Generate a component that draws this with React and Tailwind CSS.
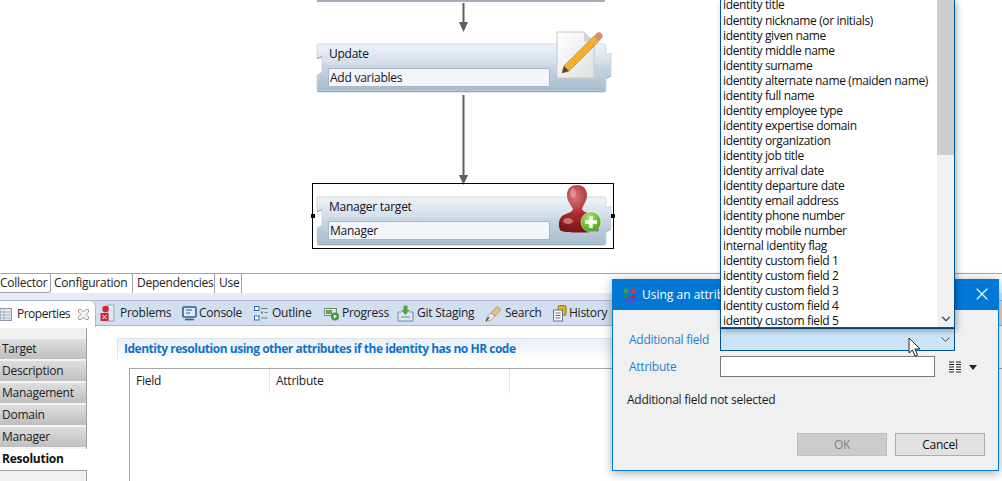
import { ChevronDown, X } from 'lucide-react';

const FIELDS = [
  'identity title', 'identity nickname (or initials)', 'identity given name', 'identity middle name',
  'identity surname', 'identity alternate name (maiden name)', 'identity full name', 'identity employee type',
  'identity expertise domain', 'identity organization', 'identity job title', 'identity arrival date',
  'identity departure date', 'identity email address', 'identity phone number', 'identity mobile number',
  'internal identity flag', 'identity custom field 1', 'identity custom field 2', 'identity custom field 3',
  'identity custom field 4', 'identity custom field 5',
];

const NAV = ['Target', 'Description', 'Management', 'Domain', 'Manager'];

function NodeShape() {
  return (
    <svg className="absolute inset-0" width="297" height="52" viewBox="0 0 297 52">
      <defs>
        <linearGradient id="nodeFill" x1="0" y1="0" x2="0" y2="1">
          <stop offset="0" stopColor="#eef3f8" />
          <stop offset="0.42" stopColor="#d3dee8" />
          <stop offset="0.46" stopColor="#c9d7e3" />
          <stop offset="1" stopColor="#a6bccd" />
        </linearGradient>
      </defs>
      <path d="M3 2 H289 Q291 2 291 4 V13 L296 11 V33 L291 36 V47 Q291 49 289 49 H4 Q2 49 2 47 V33 L7 30 V14 L2 16 V4 Q2 2 3 2 Z" fill="#7f95a8" transform="translate(0 1.2)" />
      <path d="M3 2 H289 Q291 2 291 4 V13 L296 11 V33 L291 36 V47 Q291 49 289 49 H4 Q2 49 2 47 V33 L7 30 V14 L2 16 V4 Q2 2 3 2 Z" fill="url(#nodeFill)" stroke="#c3d2df" strokeWidth="0.8" />
    </svg>
  );
}

function Node({ title, value, className, children }) {
  return (
    <div className={`absolute w-[297px] h-[52px] ${className}`}>
      <NodeShape />
      <div className="absolute left-[14px] top-[2px] text-[12px] leading-[20px] text-[#14101f]">{title}</div>
      <div className="absolute left-[13px] top-[26px] w-[222px] h-[19px] rounded-[2px] border border-[#a4b8ca] bg-[#f2f6fa] pl-[1px] text-[12px] leading-[17px] text-[#14101f]">
        {value}
      </div>
      {children}
    </div>
  );
}

function PencilIcon() {
  return (
    <svg className="absolute left-[241px] top-[-11px]" width="48" height="50" viewBox="0 0 48 50">
      <defs>
        <linearGradient id="docFill" x1="0" y1="0" x2="1" y2="1">
          <stop offset="0" stopColor="#ffffff" />
          <stop offset="1" stopColor="#dfe1e0" />
        </linearGradient>
        <linearGradient id="pencilFill" x1="0" y1="0" x2="1" y2="1">
          <stop offset="0" stopColor="#ffd04a" />
          <stop offset="1" stopColor="#e88f10" />
        </linearGradient>
      </defs>
      <path d="M1 1 H28 L38 11 V47 H1 Z" fill="url(#docFill)" stroke="#c5c9cb" />
      <path d="M28 1 L38 11 H30 Q28 11 28 9 Z" fill="#cfd3d6" />
      <path d="M38 5 L43 10 L13 40 L6 42 L8 35 Z" fill="url(#pencilFill)" stroke="#b97a12" strokeWidth="0.6" />
      <path d="M38 5 L41.5 1.5 Q43 0.5 45 2 L46.5 4 Q47 6 46 7 L43 10 Z" fill="#d98a78" />
      <path d="M8 35 L13 40 L6 42 Z" fill="#4a4a4a" />
    </svg>
  );
}

function ManagerIcon() {
  return (
    <svg className="absolute left-[243px] top-[-11px]" width="48" height="52" viewBox="0 0 48 52">
      <defs>
        <radialGradient id="bust" cx="0.4" cy="0.25" r="0.8">
          <stop offset="0" stopColor="#d8797a" />
          <stop offset="0.45" stopColor="#ac2c30" />
          <stop offset="1" stopColor="#6e1216" />
        </radialGradient>
        <radialGradient id="plus" cx="0.4" cy="0.3" r="0.8">
          <stop offset="0" stopColor="#a8e860" />
          <stop offset="1" stopColor="#3d9a18" />
        </radialGradient>
      </defs>
      <path d="M19 1 C25 1 29 5 29 11 C29 17 25 21 24 25 C25 29 34 29 38 33 C42 37 42 43 40 47 C30 49 10 49 3 47 C0 44 0 36 4 32 C8 29 14 29 15 25 C13 21 9 17 9 11 C9 5 13 1 19 1 Z" fill="url(#bust)" />
      <ellipse cx="15" cy="9" rx="3" ry="5" fill="#eeb4b4" opacity="0.5" />
      <ellipse cx="10" cy="37" rx="5" ry="3" fill="#e7a9a9" opacity="0.6" />
      <circle cx="33" cy="38" r="10" fill="url(#plus)" stroke="#e8f4df" strokeWidth="0.6" />
      <path d="M33 32 V44 M27 38 H39" stroke="#ffffff" strokeWidth="3.4" />
    </svg>
  );
}

function Arrow({ className, height }) {
  return (
    <svg className={`absolute ${className}`} width="11" height={height} viewBox={`0 0 11 ${height}`}>
      <path d={`M5.5 0 V${height - 6}`} stroke="#5f5f5f" strokeWidth="2" />
      <path d={`M1 ${height - 10} H10 L5.5 ${height} Z`} fill="#5f5f5f" />
    </svg>
  );
}

function TabIcon({ name }) {
  if (name === 'properties') {
    return (
      <svg width="12" height="13" viewBox="0 0 12 13">
        <rect x="0" y="0.5" width="11.5" height="12" fill="#e8edf3" stroke="#8494a6" />
        <path d="M0 4 H12 M0 7 H12 M0 10 H12 M4 0 V13" stroke="#9fb0c2" />
      </svg>
    );
  }
  if (name === 'problems') {
    return (
      <svg width="16" height="18" viewBox="0 0 16 18">
        <rect x="8" y="1" width="6" height="16" fill="#e3e8ee" stroke="#9aa9b8" />
        <path d="M5 11 V2" stroke="#9aa9b8" />
        <circle cx="5.5" cy="5" r="3.2" fill="#e0202a" />
        <rect x="0.5" y="9" width="8" height="8" fill="#c92a33" />
        <path d="M2.5 11 L6.500 15 M6.500 11 L2.500 15" stroke="#fff" />
      </svg>
    );
  }
  if (name === 'console') {
    return (
      <svg width="15" height="15" viewBox="0 0 15 15">
        <rect x="1" y="1" width="13" height="10" rx="1" fill="#dfe9f4" stroke="#2b5f96" strokeWidth="1.6" />
        <path d="M4 4 H10 M4 7 H8" stroke="#2b5f96" />
        <path d="M3 13.5 H12" stroke="#2b5f96" strokeWidth="1.6" />
      </svg>
    );
  }
  if (name === 'outline') {
    return (
      <svg width="14" height="15" viewBox="0 0 14 15">
        <rect x="0.5" y="0.5" width="4.5" height="4" fill="#fff" stroke="#2a6db0" />
        <rect x="0.5" y="10" width="4.5" height="4" fill="#fff" stroke="#2a6db0" />
        <rect x="7" y="5.5" width="2" height="2" fill="#6a7b8c" />
        <path d="M7 2.5 H13.5 M10.5 6.5 H13.5 M7 12 H13.5" stroke="#6a7b8c" />
      </svg>
    );
  }
  if (name === 'progress') {
    return (
      <svg width="15" height="15" viewBox="0 0 15 15">
        <rect x="0.5" y="2.5" width="12" height="7" fill="#dfe4ea" stroke="#7c8a7c" />
        <rect x="2" y="4" width="6" height="4" fill="#5dab45" />
        <circle cx="11" cy="10.5" r="4" fill="#3f9b3a" />
        <path d="M9.8 8.5 L13 10.5 L9.8 12.5 Z" fill="#fff" />
      </svg>
    );
  }
  if (name === 'git') {
    return (
      <svg width="17" height="17" viewBox="0 0 17 17">
        <path d="M4 7 H1 V16 H16 V7 H13" fill="#dce7f2" stroke="#6d8cab" />
        <path d="M4 12 H13" stroke="#6d8cab" />
        <path d="M6.500 0.5 H10.500 V5 H13 L8.500 10 L4 5 H6.500 Z" fill="#52a447" />
      </svg>
    );
  }
  if (name === 'search') {
    return (
      <svg width="17" height="17" viewBox="0 0 17 17">
        <path d="M6 8 L12 1.5 L16 4.5 L10 11 Z" fill="#e3c083" stroke="#a98647" strokeWidth="0.7" />
        <path d="M6 8 L10 11 L6 15 L1 16 L2 11.5 Z" fill="#ededea" stroke="#8f8f88" strokeWidth="0.7" />
        <path d="M1 16 L4 12" stroke="#55524c" strokeWidth="1.4" />
      </svg>
    );
  }
  return (
    <svg width="14" height="17" viewBox="0 0 14 17">
      <rect x="5" y="0.5" width="8" height="10" rx="1.5" fill="#e4ae2e" stroke="#9c7413" />
      <rect x="0.5" y="5" width="9" height="11" fill="#f3f6f9" stroke="#687786" />
      <path d="M2.500 8 H7.500 M2.500 10.500 H7.500 M2.500 13 H7.500" stroke="#687786" />
    </svg>
  );
}

function ViewTab({ icon, label, className }) {
  return (
    <div className={`flex items-center shrink-0 ${className}`}>
      <TabIcon name={icon} />
      <span className="text-[12px] text-[#222]">{label}</span>
    </div>
  );
}

export default function App() {
  return (
    <div className="relative w-[1002px] h-[481px] overflow-hidden flex flex-col bg-white font-['Open_Sans','Noto_Sans',sans-serif] text-[12px] tracking-[-0.25px] text-black">
      {/* process diagram */}
      <div className="relative h-[273px] shrink-0 bg-white">
        <div className="absolute left-[317px] top-0 w-[288px] h-[2px] bg-[#a3b0bb]" />
        <Arrow className="left-[458px] top-[3px]" height={29} />
        <Node title="Update" value="Add variables" className="left-[315px] top-[42px]">
          <PencilIcon />
        </Node>
        <Arrow className="left-[458px] top-[95px]" height={90} />
        <div className="absolute left-[312px] top-[183px] w-[302px] h-[66px] border border-black" />
        <Node title="Manager target" value="Manager" className="left-[315px] top-[195px]">
          <ManagerIcon />
        </Node>
        <div className="absolute left-[311px] top-[214px] w-[4px] h-[4px] bg-black" />
        <div className="absolute left-[611px] top-[214px] w-[4px] h-[4px] bg-black" />
      </div>

      {/* editor pages */}
      <div className="flex h-[20px] shrink-0 border-t border-[#a5a5a5] bg-white leading-[18px] text-[#222]">
        <div className="w-[51px] border-r border-b border-[#a5a5a5] rounded-br-[3px]">Collector</div>
        <div className="w-[82px] pl-[3px] border-r border-[#a5a5a5]">Configuration</div>
        <div className="w-[82px] pl-[4px] border-r border-[#a5a5a5]">Dependencies</div>
        <div className="w-[27px] pl-[4px] border-r border-[#a5a5a5]">Use</div>
      </div>
      <div className="h-[7px] shrink-0 bg-[#e6ebf5]" />

      {/* view tabs */}
      <div className="flex h-[26px] shrink-0 border-t border-b border-[#a9b8c8] bg-[#d2dfee]">
        <div className="flex items-center w-[96px] h-[26px] -mb-[1px] rounded-tr-[6px] border-r border-[#a9b8c8] bg-white">
          <TabIcon name="properties" />
          <span className="ml-[5px] text-[12px] tracking-[-0.5px] text-[#222]">Properties</span>
          <svg className="ml-[8px]" width="11" height="11" viewBox="0 0 11 11">
            <path d="M1 0.5 L3 0.5 L5.500 3 L8 0.5 L10 0.5 L10.500 1 L10.500 3 L8 5.500 L10.500 8 L10.500 10 L10 10.500 L8 10.500 L5.500 8 L3 10.500 L1 10.500 L0.5 10 L0.5 8 L3 5.500 L0.5 3 L0.5 1 Z" fill="#f6f6f6" stroke="#8a8a8a" strokeWidth="0.9" />
          </svg>
        </div>
        <ViewTab icon="problems" label="Problems" className="ml-[4px] w-[82px] gap-[4px]" />
        <ViewTab icon="console" label="Console" className="w-[72px] gap-[2px]" />
        <ViewTab icon="outline" label="Outline" className="w-[70px] gap-[4px]" />
        <ViewTab icon="progress" label="Progress" className="w-[73px] gap-[3px]" />
        <ViewTab icon="git" label="Git Staging" className="w-[88px] gap-[3px]" />
        <ViewTab icon="search" label="Search" className="w-[68px] gap-[3px]" />
        <ViewTab icon="history" label="History" className="gap-[2px]" />
      </div>

      {/* properties body */}
      <div className="flex flex-1 min-h-0 pt-[2px]">
        <div className="flex flex-col w-[87px] shrink-0 pt-[11px] bg-[#f0f0f0] border-r border-[#a0a0a0]">
          {NAV.map((item) => (
            <div key={item} className="h-[22px] pl-[2px] leading-[20px] text-[#222] border-b-2 border-[#f4f4f4] bg-gradient-to-b from-[#dedede] to-[#bfbfbf]">
              {item}
            </div>
          ))}
          <div className="h-[21px] -mr-[1px] pl-[2px] leading-[20px] font-bold text-[#111] bg-white">Resolution</div>
          <div className="flex-1 border-t border-[#a0a0a0]" />
        </div>
        <div className="flex-1 min-w-0 pl-[30px] pt-[10px]">
          <div className="h-[22px] pl-[6px] mr-[300px] border-t border-l border-[#dbe4ef] rounded-tl-[3px] bg-gradient-to-b from-[#e9f0f9] to-white text-[12px] font-bold leading-[20px] tracking-[-0.48px] text-[#0f72c9]">
            Identity resolution using other attributes if the identity has no HR code
          </div>
          <div className="ml-[12px] mt-[8px] h-[120px] border-t border-l border-[#a6a6a6]">
            <div className="flex h-[24px] leading-[24px] text-[#222]">
              <div className="w-[140px] pl-[6px] border-r border-[#e2e2e2]">Field</div>
              <div className="w-[240px] pl-[6px] border-r border-[#e2e2e2]">Attribute</div>
            </div>
          </div>
        </div>
      </div>

      {/* dialog */}
      <div className="absolute left-[612px] top-[279px] w-[387px] h-[192px] flex flex-col border border-[#0078d7] bg-[#f0f0f0] shadow-[0_2px_10px_rgba(0,0,0,0.35)]">
        <div className="flex items-center h-[30px] shrink-0 pl-[8px] bg-[#0078d7] text-white">
          <svg width="17" height="17" viewBox="0 0 17 17">
            <circle cx="5" cy="4" r="2.5" fill="#3aa53a" />
            <path d="M1 11 Q5 5 8 11 Z" fill="#2f8e2f" />
            <circle cx="12" cy="4" r="2.5" fill="#d8343a" />
            <path d="M8 11 Q12 5 16 11 Z" fill="#c02a30" />
            <ellipse cx="8.5" cy="13" rx="6" ry="3" fill="#3a58c8" />
          </svg>
          <span className="ml-[4px] text-[12px] tracking-[0px]">Using an attrib</span>
          <X className="absolute right-[6px] top-[4px] text-white" size={20} strokeWidth={1.3} />
        </div>
        <div className="flex flex-col flex-1 pl-[14px] pr-[12px]">
          <div className="flex items-center h-[22px] mt-[19px]">
            <span className="pl-[2px] w-[93px] text-[#1b7fd6]">Additional field</span>
          </div>
          <div className="flex items-center h-[22px] mt-[5px]">
            <span className="pl-[2px] w-[93px] text-[#1b7fd6]">Attribute</span>
            <div className="w-[215px] h-[21px] mb-[1px] border border-[#7a7a7a] bg-white" />
            <svg className="ml-[14px]" width="13" height="12" viewBox="0 0 13 12">
              <path d="M0 1 H5 M7 1 H12 M0 3.500 H5 M7 3.500 H12 M0 6 H5 M7 6 H12 M0 8.500 H5 M7 8.500 H12 M0 11 H5 M7 11 H12" stroke="#222" />
            </svg>
            <svg className="ml-[7px]" width="8" height="5" viewBox="0 0 8 5">
              <path d="M0 0 H8 L4 5 Z" fill="#222" />
            </svg>
          </div>
          <div className="mt-[12px] leading-[20px] text-[#1a1a1a]">Additional field not selected</div>
          <div className="flex justify-end gap-[8px] mt-[23px] pr-[1px]">
            <button className="w-[90px] h-[23px] border border-[#bfbfbf] bg-[#cccccc] text-[12px] text-[#838383]">OK</button>
            <button className="w-[90px] h-[23px] border border-[#adadad] bg-[#e1e1e1] text-[12px] text-[#111]">Cancel</button>
          </div>
        </div>
      </div>

      {/* open combo */}
      <div className="absolute left-[720px] top-[328px] w-[235px] h-[23px] flex items-center justify-end pr-[1px] border border-[#005499] bg-[#cce4f7]">
        <ChevronDown className="text-[#444]" size={15} strokeWidth={1.5} />
      </div>
      <div className="absolute left-[720px] top-[-1px] w-[235px] h-[329px] flex border border-[#005499] bg-white shadow-[2px_3px_6px_rgba(0,0,0,0.3)]">
        <div className="flex-1 min-w-0 pl-[2px] tracking-[-0.36px]">
          {FIELDS.map((field) => (
            <div key={field} className="h-[15px] leading-[15px] whitespace-nowrap text-[#111] first:h-[13px] first:leading-[10px]">{field}</div>
          ))}
        </div>
        <div className="flex flex-col items-center w-[17px] shrink-0 bg-[#f0f0f0]">
          <div className="w-full h-[155px] bg-[#cdcdcd]" />
          <ChevronDown className="mt-auto mb-[1px] text-[#505050]" size={14} strokeWidth={2.4} />
        </div>
      </div>

      {/* mouse pointer */}
      <svg className="absolute left-[908px] top-[337px]" width="14" height="20" viewBox="0 0 14 20">
        <path d="M1 1 V16 L4.500 13 L7 19 L9.500 18 L7 12 H12 Z" fill="#fff" stroke="#222" strokeWidth="1" />
      </svg>
    </div>
  );
}
